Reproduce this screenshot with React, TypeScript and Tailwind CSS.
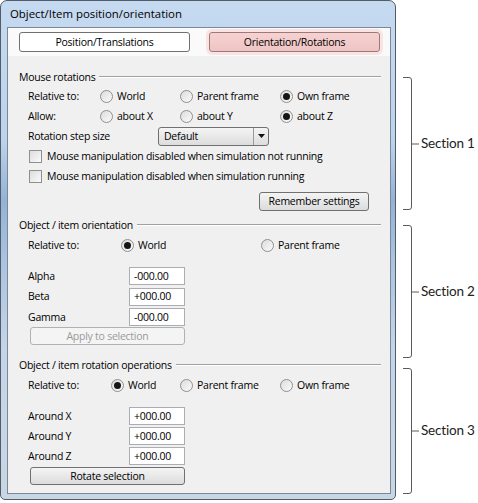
import React from 'react';

function Radio({ checked = false }: { checked?: boolean }) {
  return (
    <span className="flex h-[13px] w-[13px] shrink-0 items-center justify-center rounded-full border border-[#8e8f8f] bg-gradient-to-br from-[#dcdcdc] to-[#fbfbfb]">
      {checked && <span className="h-[7px] w-[7px] rounded-full bg-[#151515]" />}
    </span>
  );
}

function RadioItem({ label, checked, width }: { label: string; checked?: boolean; width?: string }) {
  return (
    <div className={`flex items-center gap-[4px] ${width ?? ''}`}>
      <Radio checked={checked} />
      <span>{label}</span>
    </div>
  );
}

function CheckRow({ label }: { label: string }) {
  return (
    <div className="flex h-[20px] items-center gap-[5px] pl-[21px]">
      <span className="h-[13px] w-[13px] shrink-0 border border-[#8e8f8f] bg-gradient-to-br from-[#dcdcdc] to-[#fbfbfb]" />
      <span>{label}</span>
    </div>
  );
}

function GroupHeader({ title }: { title: string }) {
  return (
    <div className="flex h-[20px] items-center pl-[11px] pr-[9px]">
      <span>{title}</span>
      <span className="ml-[4px] h-[2px] flex-1 border-t border-b border-t-[#a0a0a0] border-b-white" />
    </div>
  );
}

function ValueRow({ label, value, tall }: { label: string; value: string; tall?: boolean }) {
  return (
    <div className={`flex items-center pl-[20px] ${tall ? 'h-[21px]' : 'h-[20px]'}`}>
      <span className="w-[101px]">{label}</span>
      <span className="flex h-[18px] w-[56px] items-center border border-[#abadb3] bg-white pl-[4px]">{value}</span>
    </div>
  );
}

function WideButton({ label, disabled }: { label: string; disabled?: boolean }) {
  return (
    <div className="pl-[22px]">
      <div
        className={`flex h-[18px] w-[155px] items-center justify-center rounded-[3px] border ${
          disabled
            ? 'border-[#adb2b5] bg-[#f4f4f4] text-[#9a9a9a]'
            : 'border-[#707070] bg-gradient-to-b from-[#f4f4f4] to-[#dcdcdc]'
        }`}
      >
        {label}
      </div>
    </div>
  );
}

function Bracket({ height, label }: { height: number; label: string }) {
  const mid = Math.round(height / 2);
  return (
    <div className="flex items-center" style={{ height }}>
      <svg width="17" height={height} viewBox={`0 0 17 ${height}`} className="shrink-0">
        <path
          d={`M0 0.5 H6 Q8.5 0.5 8.5 3 V${height - 3} Q8.5 ${height - 0.5} 6 ${height - 0.5} H0 M8.5 ${mid} H16`}
          fill="none"
          stroke="#5a5a5a"
          strokeWidth="1"
        />
      </svg>
      <span className="ml-[1px] whitespace-nowrap font-['Lato',sans-serif] text-[13.5px] tracking-[-0.2px] text-[#222]">
        {label}
      </span>
    </div>
  );
}

export default function App() {
  return (
    <div className="flex h-[503px] w-[478px] overflow-hidden bg-white font-['Open_Sans',sans-serif] text-[10.5px] leading-none tracking-[-0.25px] text-black">
      {/* window */}
      <div className="flex h-[500px] w-[396px] shrink-0 flex-col rounded-t-[7px] rounded-b-[5px] border border-[#525c68] bg-[linear-gradient(180deg,#c5daf0_0%,#bcd3ec_28%,#93b3d6_40%,#a9c3e0_52%,#c4d5e8_70%,#c9d6e3_100%)] pb-[5px] pl-[6px] pr-[4px]">
        <div className="flex h-[26px] shrink-0 items-center pl-[3px] text-[11.4px] tracking-normal text-black">
          Object/Item position/orientation
        </div>
        <div className="flex flex-1 flex-col border border-[#7a8899] bg-[#f0f0f0]">
          {/* tab buttons */}
          <div className="flex h-[28px] shrink-0 items-center gap-[19px] bg-[#fafafa] pl-[11px]">
            <div className="flex h-[20px] w-[171px] items-center justify-center rounded-[3px] border border-[#707070] bg-white">
              Position/Translations
            </div>
            <div className="flex h-[20px] w-[171px] items-center justify-center rounded-[3px] border border-[#a07878] bg-gradient-to-b from-[#f6d2d2] to-[#efc4c4] shadow-[0_0_0_3px_#f9e4e4]">
              Orientation/Rotations
            </div>
          </div>

          {/* section 1 */}
          <div className="mt-[11px]">
            <GroupHeader title="Mouse rotations" />
            <div className="flex h-[19px] items-center pl-[20px]">
              <span className="w-[72px]">Relative to:</span>
              <RadioItem label="World" width="w-[80px]" />
              <RadioItem label="Parent frame" width="w-[100px]" />
              <RadioItem label="Own frame" checked />
            </div>
            <div className="flex h-[20px] items-center pl-[20px]">
              <span className="w-[72px]">Allow:</span>
              <RadioItem label="about X" width="w-[80px]" />
              <RadioItem label="about Y" width="w-[100px]" />
              <RadioItem label="about Z" checked />
            </div>
            <div className="flex h-[20px] items-center pl-[20px]">
              <span className="w-[130px]">Rotation step size</span>
              <div className="flex h-[19px] w-[111px] items-center rounded-[3px] border border-[#707070] bg-gradient-to-b from-[#f4f4f4] to-[#dddddd]">
                <span className="flex-1 pl-[5px]">Default</span>
                <span className="flex h-full w-[15px] items-center justify-center border-l border-[#9a9a9a]">
                  <svg width="7" height="4" viewBox="0 0 7 4">
                    <path d="M0 0 H7 L3.5 4 Z" fill="#111" />
                  </svg>
                </span>
              </div>
            </div>
            <CheckRow label="Mouse manipulation disabled when simulation not running" />
            <CheckRow label="Mouse manipulation disabled when simulation running" />
            <div className="mt-[6px] pl-[251px]">
              <div className="flex h-[19px] w-[110px] items-center justify-center rounded-[3px] border border-[#707070] bg-gradient-to-b from-[#f4f4f4] to-[#dcdcdc]">
                Remember settings
              </div>
            </div>
          </div>

          {/* section 2 */}
          <div className="mt-[4px]">
            <GroupHeader title="Object / item orientation" />
            <div className="flex h-[20px] items-center pl-[20px]">
              <span className="w-[93px]">Relative to:</span>
              <RadioItem label="World" checked width="w-[140px]" />
              <RadioItem label="Parent frame" />
            </div>
            <div className="mt-[11px]">
              <ValueRow label="Alpha" value="-000.00" />
              <ValueRow label="Beta" value="+000.00" tall />
              <ValueRow label="Gamma" value="-000.00" />
              <WideButton label="Apply to selection" disabled />
            </div>
          </div>

          {/* section 3 */}
          <div className="mt-[10px]">
            <GroupHeader title="Object / item rotation operations" />
            <div className="flex h-[20px] items-center pl-[20px]">
              <span className="w-[83px]">Relative to:</span>
              <RadioItem label="World" checked width="w-[69px]" />
              <RadioItem label="Parent frame" width="w-[100px]" />
              <RadioItem label="Own frame" />
            </div>
            <div className="mt-[11px]">
              <ValueRow label="Around X" value="+000.00" />
              <ValueRow label="Around Y" value="+000.00" />
              <ValueRow label="Around Z" value="+000.00" />
              <div className="mt-[1px]">
                <WideButton label="Rotate selection" />
              </div>
            </div>
          </div>
        </div>
      </div>

      {/* section annotations */}
      <div className="flex flex-col pl-[7px] pt-[77px]">
        <Bracket height={133} label="Section 1" />
        <div className="mt-[15px]">
          <Bracket height={133} label="Section 2" />
        </div>
        <div className="mt-[10px]">
          <Bracket height={126} label="Section 3" />
        </div>
      </div>
    </div>
  );
}
